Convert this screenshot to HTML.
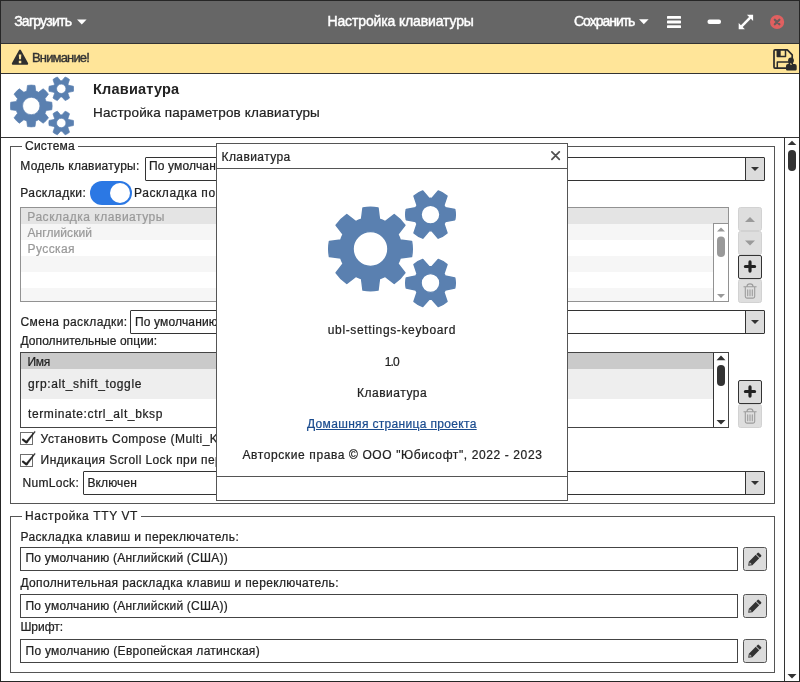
<!DOCTYPE html>
<html lang="ru">
<head>
<meta charset="utf-8">
<title>Настройка клавиатуры</title>
<style>
*{box-sizing:border-box;margin:0;padding:0}
html,body{width:800px;height:682px;overflow:hidden;background:#fff}
body{font-family:"Liberation Sans",sans-serif;font-size:12px;color:#222;position:relative}
.abs,.t{position:absolute}
.t{white-space:pre;line-height:20px;text-decoration-thickness:1px;-webkit-text-stroke:.22px currentColor}
a.t{cursor:pointer}
#win{position:absolute;left:0;top:0;width:800px;height:682px;border:1px solid #262626;overflow:hidden}
#titlebar{position:absolute;left:0;top:0;width:798px;height:43px;background:#666;border-bottom:1px solid #333}
#infobar{position:absolute;left:0;top:43px;width:798px;height:30px;background:#ffe599;border-bottom:1px solid #333}
#header{position:absolute;left:0;top:73px;width:798px;height:64px;background:#fff;border-bottom:1px solid #333}
#vscroll{position:absolute;left:783px;top:137px;width:15px;height:543px;border-left:1px solid #333;background:#fff}
fieldset{position:absolute;border:1px solid #555;background:transparent}
.combo{position:absolute;height:24px;border:1px solid #333;background:#fff;border-radius:1px}
.combo .btn{position:absolute;right:0;top:0;width:19px;height:22px;border-left:1px solid #333;background:#dcdcdc}
.combo .btn:after{content:"";position:absolute;left:5.300px;top:9px;border:4.700px solid transparent;border-top:4.800px solid #333;border-bottom:0;width:0;height:0}
.entry{position:absolute;left:19px;width:718px;height:24px;border:1px solid #444;background:#fff}
.ibtn{position:absolute;width:24px;height:24px;border:1px solid #555;border-radius:2.5px;background:#dcdcdc}
.ibtn.plus{border-color:#333;border-radius:2px}
.ibtn.dis{border-color:#d2d2d2;background:#dedede}
.ibtn svg{position:absolute;left:0;top:0}
.list{position:absolute;left:19px;width:709px;border:1px solid #444;background:#fff;overflow:hidden}
.list.dis{border-color:#929292}
.row{position:absolute;left:0;width:100%}
.lsb{position:absolute;right:0;width:15px;border-left:1px solid #333;background:#fff}
.dis .lsb{border-color:#929292}
.chk{position:absolute;left:19px;width:13px;height:13px;border:1px solid #6e6e6e;background:#fff}
#switch{position:absolute;left:89px;top:180px;width:42px;height:24px;border-radius:12px;background:#2b78e4}
#switch i{position:absolute;right:2px;top:2px;width:20px;height:20px;border-radius:10px;background:#fff}
#dialog{position:absolute;left:215px;top:142px;width:352px;height:358px;border:1px solid #555;background:#fff}
#dialog .tb{position:absolute;left:0;top:0;width:350px;height:25px;border-bottom:1px solid #555}
#dialog .ft{position:absolute;left:0;top:332px;width:350px;height:1px;background:#555}
</style>
</head>
<body>
<div id="win">
  <div id="titlebar">
    <svg class="abs" style="left:0;top:0" width="798" height="43" viewBox="1 1 798 43">
      <path d="M77 19.5h9.6l-4.8 5z" fill="#fff"/>
      <path d="M639 19.3h9.6l-4.8 5z" fill="#fff"/>
      <g fill="#fff"><rect x="667" y="16" width="14" height="2.8" rx=".6"/><rect x="667" y="20.6" width="14" height="2.8" rx=".6"/><rect x="667" y="25.2" width="14" height="2.8" rx=".6"/></g>
      <rect x="707.5" y="19.6" width="13.5" height="4.4" rx="2" fill="#fff"/>
      <g fill="#fff"><path d="M753.100 14.800h-6.200l6.200 6.200zM738.700 29.200h6.200l-6.200-6.200z"/><path d="M741.600 26.300l8.600-8.600" stroke="#fff" stroke-width="2.500"/></g>
      <circle cx="777.100" cy="22" r="7.100" fill="#e06060"/>
      <path d="M774.800 19.700l4.600 4.600M779.400 19.700l-4.600 4.600" stroke="#685c5c" stroke-width="2.200" stroke-linecap="round"/>
    </svg>
  </div>
  <div id="infobar">
    <svg class="abs" style="left:0;top:0" width="798" height="29" viewBox="1 44 798 29">
      <path d="M20 49.600q.6 0 1 .7l7 12.600q.4.700 0 1.300-.4.600-1.100.6H13.100q-.7 0-1.100-.6-.4-.6 0-1.300l7-12.600q.4-.7 1-.7z" fill="#2f2f2f"/>
      <path d="M18.800 54.400h2.500l-.3 4.900h-1.900zM18.800 60.700h2.500v2.500h-2.500z" fill="#ffe599"/>
    </svg>
    <svg class="abs" style="left:770px;top:3px" width="28" height="26" viewBox="771 47 28 26">
      <path d="M775 49.900h12.300l4.900 4.900v12.300q0 1-1 1h-16.200q-1 0-1-1v-16.200q0-1 1-1z" fill="none" stroke="#2b2b2b" stroke-width="1.700" stroke-linejoin="round"/>
      <path d="M777.300 50v6.400h8.200v-6.400" fill="none" stroke="#2b2b2b" stroke-width="1.500" stroke-linejoin="round"/>
      <rect x="777" y="50" width="3.700" height="6.400" fill="#2b2b2b"/>
      <path d="M777.300 68v-6h12v6" fill="none" stroke="#2b2b2b" stroke-width="1.500" stroke-linejoin="round"/>
      <circle cx="791" cy="60.500" r="2.900" fill="#2b2b2b"/>
      <path d="M786 69.200v-3.200q0-2 2-2h6.700q2 0 2 2v3.200q0 1.300-1.300 1.300h-8.100q-1.300 0-1.300-1.300z" fill="#2b2b2b"/>
      <rect x="790.400" y="64" width="1.300" height="1" fill="#d9c382"/>
    </svg>
  </div>
  <div id="header">
    <svg class="abs" style="left:9px;top:0" width="64" height="64" viewBox="0 0 128 128"><path fill="#5a80b0" stroke="#5a80b0" stroke-width="1.4" stroke-linejoin="round" fill-rule="evenodd" d="M51.50 34.23L50.05 22.89A41.80 41.80 0 0 0 34.95 22.89L33.50 34.23A31.10 31.10 0 0 0 27.81 36.59L18.77 29.59A41.80 41.80 0 0 0 8.09 40.27L15.09 49.31A31.10 31.10 0 0 0 12.73 55.00L1.39 56.45A41.80 41.80 0 0 0 1.39 71.55L12.73 73.00A31.10 31.10 0 0 0 15.09 78.69L8.09 87.73A41.80 41.80 0 0 0 18.77 98.41L27.81 91.41A31.10 31.10 0 0 0 33.50 93.77L34.95 105.11A41.80 41.80 0 0 0 50.05 105.11L51.50 93.77A31.10 31.10 0 0 0 57.19 91.41L66.23 98.41A41.80 41.80 0 0 0 76.91 87.73L69.91 78.69A31.10 31.10 0 0 0 72.27 73.00L83.61 71.55A41.80 41.80 0 0 0 83.61 56.45L72.27 55.00A31.10 31.10 0 0 0 69.91 49.31L76.91 40.27A41.80 41.80 0 0 0 66.23 29.59L57.19 36.59A31.10 31.10 0 0 0 51.50 34.23ZM25.10 64.00a17.40 17.40 0 1 0 34.80 0a17.40 17.40 0 1 0 -34.80 0ZM117.22 36.60L126.77 34.70A24.80 24.80 0 0 0 126.77 24.50L117.22 22.60A16.30 16.30 0 0 0 115.92 20.35L119.05 11.13A24.80 24.80 0 0 0 110.22 6.03L103.80 13.35A16.30 16.30 0 0 0 101.20 13.35L94.78 6.03A24.80 24.80 0 0 0 85.95 11.13L89.08 20.35A16.30 16.30 0 0 0 87.78 22.60L78.23 24.50A24.80 24.80 0 0 0 78.23 34.70L87.78 36.60A16.30 16.30 0 0 0 89.08 38.85L85.95 48.07A24.80 24.80 0 0 0 94.78 53.17L101.20 45.85A16.30 16.30 0 0 0 103.80 45.85L110.22 53.17A24.80 24.80 0 0 0 119.05 48.07L115.92 38.85A16.30 16.30 0 0 0 117.22 36.60ZM93.10 29.60a9.40 9.40 0 1 0 18.80 0a9.40 9.40 0 1 0 -18.80 0ZM117.22 105.00L126.77 103.10A24.80 24.80 0 0 0 126.77 92.90L117.22 91.00A16.30 16.30 0 0 0 115.92 88.75L119.05 79.53A24.80 24.80 0 0 0 110.22 74.43L103.80 81.75A16.30 16.30 0 0 0 101.20 81.75L94.78 74.43A24.80 24.80 0 0 0 85.95 79.53L89.08 88.75A16.30 16.30 0 0 0 87.78 91.00L78.23 92.90A24.80 24.80 0 0 0 78.23 103.10L87.78 105.00A16.30 16.30 0 0 0 89.08 107.25L85.95 116.47A24.80 24.80 0 0 0 94.78 121.57L101.20 114.25A16.30 16.30 0 0 0 103.80 114.25L110.22 121.57A24.80 24.80 0 0 0 119.05 116.47L115.92 107.25A16.30 16.30 0 0 0 117.22 105.00ZM93.10 98.00a9.40 9.40 0 1 0 18.80 0a9.40 9.40 0 1 0 -18.80 0Z"/></svg>
  </div>
  <div id="vscroll">
    <svg class="abs" style="left:0;top:0" width="14" height="543" viewBox="785 138 14 543">
      <path d="M787.700 145.100l4.300-4.300 4.300 4.300z" fill="#333"/>
      <rect x="788" y="150" width="8" height="21" rx="4" fill="#333"/>
      <path d="M787.500 674l4.500 4.500 4.500-4.500z" fill="#333"/>
    </svg>
  </div>

  <fieldset style="left:9px;top:145px;width:765px;height:358px"></fieldset>
  <fieldset style="left:9px;top:515px;width:765px;height:157px"></fieldset>
  <div class="abs" style="left:21px;top:145px;width:56px;height:1px;background:#fff"></div>
  <div class="abs" style="left:21px;top:515px;width:119px;height:1px;background:#fff"></div>

  <div class="combo" style="left:144px;top:156px;width:620px"><div class="btn"></div></div>
  <div id="switch"><i></i></div>

  <div class="list dis" style="top:206px;height:95px">
    <div class="row" style="top:0;height:16px;background:#e4e4e4"></div>
    <div class="row" style="top:16px;height:16px;background:#f6f6f6"></div>
    <div class="row" style="top:48px;height:16px;background:#f6f6f6"></div>
    <div class="row" style="top:80px;height:16px;background:#f6f6f6"></div>
    <div class="lsb" style="top:15px;height:79px;border-top:1px solid #929292">
      <svg class="abs" style="left:0;top:0" width="14" height="78" viewBox="714 224 14 78">
        <path d="M717 231.500l4-4 4 4z" fill="#999"/><rect x="717" y="236.500" width="8" height="20.500" rx="4" fill="#999"/><path d="M717 294l4 4 4-4z" fill="#999"/>
      </svg>
    </div>
  </div>
  <div class="ibtn dis" style="left:737px;top:206px"><svg width="22" height="22" viewBox="739 208 22 22"><path d="M745 222h10l-5-5z" fill="#9a9a9a"/></svg></div>
  <div class="ibtn dis" style="left:737px;top:230px"><svg width="22" height="22" viewBox="739 232 22 22"><path d="M745 240.500h10l-5 5z" fill="#9a9a9a"/></svg></div>
  <div class="ibtn plus" style="left:737px;top:254px"><svg width="22" height="22" viewBox="739 256 22 22"><path d="M750 261.900v9.200M745.400 266.500h9.200" stroke="#222" stroke-width="3.200" stroke-linecap="round"/></svg></div>
  <div class="ibtn dis" style="left:737px;top:278px"><svg width="22" height="22" viewBox="739 280 22 22"><g fill="none" stroke="#9c9c9c" stroke-width="1.1" stroke-linecap="round"><path d="M743.900 286.7 h12.300M745.300 287.0 v9.500q0 1.600 1.600 1.600h6.200q1.600 0 1.600-1.600v-9.500M747 286.5 q0-2.600 3-2.600t3 2.600M747.700 289.7 v6M750 289.7 v6M752.300 289.7 v6"/></g></svg></div>

  <div class="combo" style="left:129px;top:309px;width:635px"><div class="btn"></div></div>

  <div class="list" style="top:351px;height:76px">
    <div class="row" style="top:0;height:16px;background:#cacaca"></div>
    <div class="row" style="top:16px;height:30px;background:#eee"></div>
    <div class="lsb" style="top:0;height:74px">
      <svg class="abs" style="left:0;top:0" width="14" height="74" viewBox="714 353 14 74">
        <path d="M716.500 360.200l4.500-4.700 4.500 4.700z" fill="#333"/><rect x="717" y="365" width="8" height="21" rx="4" fill="#333"/><path d="M716.500 420l4.500 4.600 4.500-4.600z" fill="#333"/>
      </svg>
    </div>
  </div>
  <div class="ibtn plus" style="left:737px;top:379px"><svg width="22" height="22" viewBox="739 381 22 22"><path d="M750 386.900v9.200M745.400 391.500h9.200" stroke="#222" stroke-width="3.200" stroke-linecap="round"/></svg></div>
  <div class="ibtn dis" style="left:737px;top:403px"><svg width="22" height="22" viewBox="739 405 22 22"><g fill="none" stroke="#9c9c9c" stroke-width="1.1" stroke-linecap="round"><path d="M743.900 411.7 h12.300M745.300 412.0 v9.500q0 1.600 1.600 1.600h6.200q1.600 0 1.600-1.600v-9.500M747 411.5 q0-2.600 3-2.600t3 2.600M747.700 414.7 v6M750 414.7 v6M752.300 414.7 v6"/></g></svg></div>

  <div class="chk" style="top:431px"></div>
  <div class="chk" style="top:453px"></div>
  <svg class="abs" style="left:19px;top:428px" width="20" height="42" viewBox="20 429 20 42">
    <g fill="#222" stroke="#222"><path d="M23 439.600l3.400 2.700" fill="none" stroke-width="2.200" stroke-linecap="round"/><path d="M25.540 441.720L34.610 431.190 35.390 431.810 27.260 443.080z" stroke-width=".3" stroke-linejoin="round"/></g>
    <g fill="#222" stroke="#222" transform="translate(0 22)"><path d="M23 439.600l3.400 2.700" fill="none" stroke-width="2.200" stroke-linecap="round"/><path d="M25.540 441.720L34.610 431.190 35.390 431.810 27.260 443.080z" stroke-width=".3" stroke-linejoin="round"/></g>
  </svg>

  <div class="combo" style="left:82px;top:470px;width:682px"><div class="btn"></div></div>

  <div class="entry" style="top:546px"></div>
  <div class="entry" style="top:593px"></div>
  <div class="entry" style="top:638px"></div>
  <div class="ibtn" style="left:742px;top:546px"><svg width="22" height="22" viewBox="0 0 22 22"><path d="M4.20 17.80L4.84 13.63L11.70 6.77L15.23 10.30L8.37 17.16ZM12.26 6.20L13.53 4.93Q14.24 4.22 14.95 4.93L17.07 7.05Q17.78 7.76 17.07 8.47L15.80 9.74Z" fill="#333"/><path d="M5.26 16.74L5.68 14.19L7.81 16.32Z" fill="#bdbdbd"/></svg></div>
  <div class="ibtn" style="left:742px;top:593px"><svg width="22" height="22" viewBox="0 0 22 22"><path d="M4.20 17.80L4.84 13.63L11.70 6.77L15.23 10.30L8.37 17.16ZM12.26 6.20L13.53 4.93Q14.24 4.22 14.95 4.93L17.07 7.05Q17.78 7.76 17.07 8.47L15.80 9.74Z" fill="#333"/><path d="M5.26 16.74L5.68 14.19L7.81 16.32Z" fill="#bdbdbd"/></svg></div>
  <div class="ibtn" style="left:742px;top:638px"><svg width="22" height="22" viewBox="0 0 22 22"><path d="M4.20 17.80L4.84 13.63L11.70 6.77L15.23 10.30L8.37 17.16ZM12.26 6.20L13.53 4.93Q14.24 4.22 14.95 4.93L17.07 7.05Q17.78 7.76 17.07 8.47L15.80 9.74Z" fill="#333"/><path d="M5.26 16.74L5.68 14.19L7.81 16.32Z" fill="#bdbdbd"/></svg></div>

  <div id="maintext" style="position:absolute;left:-1px;top:-1px;will-change:transform">
<span class="t" style="left:14.2px;top:10.6px;font-size:14px;color:#fff;letter-spacing:-0.77px;-webkit-text-stroke:0.45px #fff;">Загрузить</span>
<span class="t" style="left:327.5px;top:10.6px;font-size:14px;color:#fff;letter-spacing:-0.14px;-webkit-text-stroke:0.45px #fff;">Настройка клавиатуры</span>
<span class="t" style="left:574.0px;top:10.6px;font-size:14px;color:#fff;letter-spacing:-1.02px;-webkit-text-stroke:0.45px #fff;">Сохранить</span>
<span class="t" style="left:32.0px;top:48.0px;font-size:13px;color:#333;letter-spacing:-0.84px;-webkit-text-stroke:0.4px #333;">Внимание!</span>
<span class="t" style="left:93.0px;top:79.3px;font-size:14.5px;font-weight:700;letter-spacing:0.21px;-webkit-text-stroke:0;">Клавиатура</span>
<span class="t" style="left:93.0px;top:103.0px;font-size:13.5px;letter-spacing:0.16px;">Настройка параметров клавиатуры</span>
<span class="t" style="left:25.0px;top:135.8px;font-size:12px;letter-spacing:0.24px;">Система</span>
<span class="t" style="left:20.3px;top:156.4px;font-size:12px;letter-spacing:0.23px;">Модель клавиатуры:</span>
<span class="t" style="left:149.0px;top:156.4px;font-size:12px;letter-spacing:0.15px;">По умолчанию</span>
<span class="t" style="left:20.3px;top:182.5px;font-size:12px;letter-spacing:0.43px;">Раскладки:</span>
<span class="t" style="left:134.0px;top:182.5px;font-size:12px;letter-spacing:0.55px;">Раскладка по умолчанию</span>
<span class="t" style="left:27.3px;top:206.6px;font-size:12px;color:#999;letter-spacing:0.52px;">Раскладка клавиатуры</span>
<span class="t" style="left:27.5px;top:222.5px;font-size:12px;color:#999;letter-spacing:0.07px;">Английский</span>
<span class="t" style="left:27.5px;top:238.5px;font-size:12px;color:#999;letter-spacing:0.42px;">Русская</span>
<span class="t" style="left:20.5px;top:311.5px;font-size:12px;letter-spacing:0.38px;">Смена раскладки:</span>
<span class="t" style="left:135.0px;top:311.5px;font-size:12px;letter-spacing:0.15px;">По умолчанию</span>
<span class="t" style="left:20.5px;top:331.0px;font-size:12px;letter-spacing:0.07px;">Дополнительные опции:</span>
<span class="t" style="left:27.5px;top:351.5px;font-size:12px;letter-spacing:-0.29px;">Имя</span>
<span class="t" style="left:28.0px;top:373.8px;font-size:12px;letter-spacing:0.63px;">grp:alt_shift_toggle</span>
<span class="t" style="left:28.0px;top:404.0px;font-size:12px;letter-spacing:0.62px;">terminate:ctrl_alt_bksp</span>
<span class="t" style="left:40.6px;top:428.6px;font-size:12px;letter-spacing:0.47px;">Установить Compose (Multi_Key)</span>
<span class="t" style="left:40.6px;top:450.4px;font-size:12px;letter-spacing:0.41px;">Индикация Scroll Lock при переключении</span>
<span class="t" style="left:22.6px;top:472.5px;font-size:12px;letter-spacing:0.30px;">NumLock:</span>
<span class="t" style="left:87.4px;top:472.5px;font-size:12px;letter-spacing:0.13px;">Включен</span>
<span class="t" style="left:25.0px;top:505.6px;font-size:12px;letter-spacing:0.59px;">Настройка TTY VT</span>
<span class="t" style="left:20.4px;top:527.4px;font-size:12px;letter-spacing:0.40px;">Раскладка клавиш и переключатель:</span>
<span class="t" style="left:25.5px;top:548.4px;font-size:12px;letter-spacing:0.23px;">По умолчанию (Английский (США))</span>
<span class="t" style="left:20.4px;top:573.4px;font-size:12px;letter-spacing:0.37px;">Дополнительная раскладка клавиш и переключатель:</span>
<span class="t" style="left:25.5px;top:595.6px;font-size:12px;letter-spacing:0.23px;">По умолчанию (Английский (США))</span>
<span class="t" style="left:20.4px;top:617.4px;font-size:12px;letter-spacing:-0.04px;">Шрифт:</span>
<span class="t" style="left:25.5px;top:640.6px;font-size:12px;letter-spacing:0.26px;">По умолчанию (Европейская латинская)</span>
  </div>

  <div id="dialog">
    <div class="tb"></div>
    <svg class="abs" style="left:334px;top:7px" width="11" height="11" viewBox="0 0 11 11"><path d="M.9.900l7.400 7.400M8.300.900l-7.400 7.400" stroke="#505050" stroke-width="1.700" stroke-linecap="round"/></svg>
    <svg class="abs" style="left:111px;top:40.500px" width="128" height="128" viewBox="0 0 128 128"><path fill="#5a80b0" stroke="#5a80b0" stroke-width="1.4" stroke-linejoin="round" fill-rule="evenodd" d="M51.50 34.23L50.05 22.89A41.80 41.80 0 0 0 34.95 22.89L33.50 34.23A31.10 31.10 0 0 0 27.81 36.59L18.77 29.59A41.80 41.80 0 0 0 8.09 40.27L15.09 49.31A31.10 31.10 0 0 0 12.73 55.00L1.39 56.45A41.80 41.80 0 0 0 1.39 71.55L12.73 73.00A31.10 31.10 0 0 0 15.09 78.69L8.09 87.73A41.80 41.80 0 0 0 18.77 98.41L27.81 91.41A31.10 31.10 0 0 0 33.50 93.77L34.95 105.11A41.80 41.80 0 0 0 50.05 105.11L51.50 93.77A31.10 31.10 0 0 0 57.19 91.41L66.23 98.41A41.80 41.80 0 0 0 76.91 87.73L69.91 78.69A31.10 31.10 0 0 0 72.27 73.00L83.61 71.55A41.80 41.80 0 0 0 83.61 56.45L72.27 55.00A31.10 31.10 0 0 0 69.91 49.31L76.91 40.27A41.80 41.80 0 0 0 66.23 29.59L57.19 36.59A31.10 31.10 0 0 0 51.50 34.23ZM25.10 64.00a17.40 17.40 0 1 0 34.80 0a17.40 17.40 0 1 0 -34.80 0ZM117.22 36.60L126.77 34.70A24.80 24.80 0 0 0 126.77 24.50L117.22 22.60A16.30 16.30 0 0 0 115.92 20.35L119.05 11.13A24.80 24.80 0 0 0 110.22 6.03L103.80 13.35A16.30 16.30 0 0 0 101.20 13.35L94.78 6.03A24.80 24.80 0 0 0 85.95 11.13L89.08 20.35A16.30 16.30 0 0 0 87.78 22.60L78.23 24.50A24.80 24.80 0 0 0 78.23 34.70L87.78 36.60A16.30 16.30 0 0 0 89.08 38.85L85.95 48.07A24.80 24.80 0 0 0 94.78 53.17L101.20 45.85A16.30 16.30 0 0 0 103.80 45.85L110.22 53.17A24.80 24.80 0 0 0 119.05 48.07L115.92 38.85A16.30 16.30 0 0 0 117.22 36.60ZM93.10 29.60a9.40 9.40 0 1 0 18.80 0a9.40 9.40 0 1 0 -18.80 0ZM117.22 105.00L126.77 103.10A24.80 24.80 0 0 0 126.77 92.90L117.22 91.00A16.30 16.30 0 0 0 115.92 88.75L119.05 79.53A24.80 24.80 0 0 0 110.22 74.43L103.80 81.75A16.30 16.30 0 0 0 101.20 81.75L94.78 74.43A24.80 24.80 0 0 0 85.95 79.53L89.08 88.75A16.30 16.30 0 0 0 87.78 91.00L78.23 92.90A24.80 24.80 0 0 0 78.23 103.10L87.78 105.00A16.30 16.30 0 0 0 89.08 107.25L85.95 116.47A24.80 24.80 0 0 0 94.78 121.57L101.20 114.25A16.30 16.30 0 0 0 103.80 114.25L110.22 121.57A24.80 24.80 0 0 0 119.05 116.47L115.92 107.25A16.30 16.30 0 0 0 117.22 105.00ZM93.10 98.00a9.40 9.40 0 1 0 18.80 0a9.40 9.40 0 1 0 -18.80 0Z"/></svg>
    <div class="ft"></div>
  </div>
  <div id="dlgtext" style="position:absolute;left:-1px;top:-1px;will-change:transform">
<span class="t" style="left:221.5px;top:146.5px;font-size:12px;letter-spacing:0.42px;">Клавиатура</span>
<span class="t" style="left:327.8px;top:319.5px;font-size:12px;letter-spacing:0.64px;">ubl-settings-keyboard</span>
<span class="t" style="left:384.7px;top:351.7px;font-size:12px;letter-spacing:-0.80px;">1.0</span>
<span class="t" style="left:357.0px;top:382.6px;font-size:12px;letter-spacing:0.52px;">Клавиатура</span>
<a class="t" style="left:307.0px;top:413.6px;font-size:12px;color:#1a4b8e;letter-spacing:0.33px;text-decoration:underline;">Домашняя страница проекта</a>
<span class="t" style="left:242.4px;top:444.5px;font-size:12px;letter-spacing:0.61px;">Авторские права © ООО &quot;Юбисофт&quot;, 2022 - 2023</span>
  </div>
</div>
</body>
</html>
